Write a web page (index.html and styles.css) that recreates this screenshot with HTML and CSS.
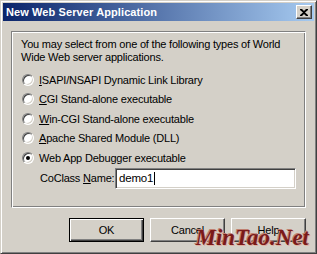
FILE: index.html
```html
<!DOCTYPE html>
<html lang="en">
<head>
  <meta charset="UTF-8">
  <title>New Web Server Application</title>
  <link rel="stylesheet" href="styles.css">
</head>
<body>
  <div class="dialog">
    <div class="titlebar">
      <span class="title">New Web Server Application</span>
      <span class="close">
        <svg width="8" height="7" viewBox="0 0 8 7"><path d="M0 0h2l2 2 2-2h2v1L5 3.5 8 6v1H6L4 5 2 7H0V6l3-2.5L0 1z" fill="#000"/></svg>
      </span>
    </div>

    <div class="content">
      <div class="group">
        <p class="intro">You may select from one of the following types of World<br>Wide Web server applications.</p>

        <div class="option"><span class="radio"></span><span><u>I</u>SAPI/NSAPI Dynamic Link Library</span></div>
        <div class="option"><span class="radio"></span><span><u>C</u>GI Stand-alone executable</span></div>
        <div class="option"><span class="radio"></span><span><u>W</u>in-CGI Stand-alone executable</span></div>
        <div class="option"><span class="radio"></span><span><u>A</u>pache Shared Module (DLL)</span></div>
        <div class="option"><span class="radio checked"></span><span>Web App Debugger executable</span></div>

        <div class="coclass">
          <span class="label">CoClass <u>N</u>ame:</span>
          <span class="edit">demo1<span class="caret"></span></span>
        </div>
      </div>

      <div class="buttons">
        <span class="btn default"><span>OK</span></span>
        <span class="btn"><span>Cancel</span></span>
        <span class="btn"><span>Help</span></span>
      </div>
    </div>

    <div class="watermark">MinTao.Net</div>
  </div>
</body>
</html>
```

FILE: styles.css
```css
html, body {
  margin: 0;
  padding: 0;
  background: #d4d0c8;
}
.dialog {
  position: relative;
  box-sizing: border-box;
  width: 317px;
  height: 254px;
  background: #d4d0c8;
  border: 1px solid;
  border-color: #d4d0c8 #404040 #404040 #d4d0c8;
  box-shadow: inset 1px 1px 0 #fff, inset -1px -1px 0 #808080;
  padding: 2px;
  font-family: "Liberation Sans", Arial, sans-serif;
  font-size: 11px;
  letter-spacing: -0.2px;
  color: #000;
}
.titlebar {
  height: 18px;
  display: flex;
  align-items: center;
  justify-content: space-between;
  padding: 0 2px 0 3px;
  background: linear-gradient(to right, #0a246a, #a6caf0);
}
.title {
  color: #fff;
  font-weight: bold;
  font-size: 11px;
  letter-spacing: 0.1px;
}
.close {
  box-sizing: border-box;
  width: 16px;
  height: 14px;
  display: flex;
  align-items: center;
  justify-content: center;
  background: #d4d0c8;
  border: 1px solid;
  border-color: #fff #404040 #404040 #fff;
  box-shadow: inset -1px -1px 0 #808080;
}
.content {
  padding: 10px 8px 0 8px;
}
.group {
  box-sizing: border-box;
  height: 177px;
  border: 1px solid;
  border-color: #808080 #fff #fff #808080;
  box-shadow: inset 1px 1px 0 #fff, inset -1px -1px 0 #808080;
  padding: 6px 9px 0 9px;
}
.intro {
  margin: 0 0 6px 0;
  line-height: 13px;
  white-space: nowrap;
}
.option {
  display: flex;
  align-items: center;
  gap: 5px;
  height: 19.5px;
  padding-left: 1px;
}
.radio {
  box-sizing: border-box;
  width: 12px;
  height: 12px;
  border-radius: 50%;
  background: #fff;
  border: 1px solid;
  border-color: #808080 #fff #fff #808080;
  box-shadow: inset 1px 1px 0 #404040, inset -1px -1px 0 #d4d0c8;
  position: relative;
}
.radio.checked::after {
  content: "";
  position: absolute;
  left: 3px;
  top: 3px;
  width: 4px;
  height: 4px;
  border-radius: 50%;
  background: #000;
}
.coclass {
  display: flex;
  align-items: center;
  padding-left: 19px;
}
.label {
  white-space: nowrap;
}
.edit {
  box-sizing: border-box;
  width: 181px;
  height: 21px;
  margin-left: auto;
  background: #fff;
  border: 1px solid;
  border-color: #808080 #fff #fff #808080;
  box-shadow: inset 1px 1px 0 #404040, inset -1px -1px 0 #d4d0c8;
  padding: 3px 0 0 3px;
  font-size: 11.5px;
  display: flex;
  align-items: flex-start;
}
.caret {
  display: inline-block;
  width: 1px;
  height: 13px;
  background: #000;
  margin-left: 1px;
}
.buttons {
  display: flex;
  justify-content: flex-end;
  gap: 6px;
  margin-top: 10px;
}
.btn {
  box-sizing: border-box;
  width: 75px;
  height: 24px;
  display: flex;
  align-items: center;
  justify-content: center;
  background: #d4d0c8;
  border: 1px solid;
  border-color: #fff #404040 #404040 #fff;
  box-shadow: inset -1px -1px 0 #808080;
}
.btn.default {
  border: 1px solid #000;
  box-shadow: inset 1px 1px 0 #fff, inset -1px -1px 0 #404040, inset -2px -2px 0 #808080;
}
.watermark {
  position: absolute;
  right: 7px;
  bottom: 2px;
  font-family: "Liberation Serif", "Times New Roman", serif;
  font-style: italic;
  font-weight: bold;
  font-size: 23px;
  letter-spacing: 0;
  color: #7a1a1a;
  text-shadow: 1px 1px 0 #e0b0a0, -1px -1px 0 #c08070;
}
```
